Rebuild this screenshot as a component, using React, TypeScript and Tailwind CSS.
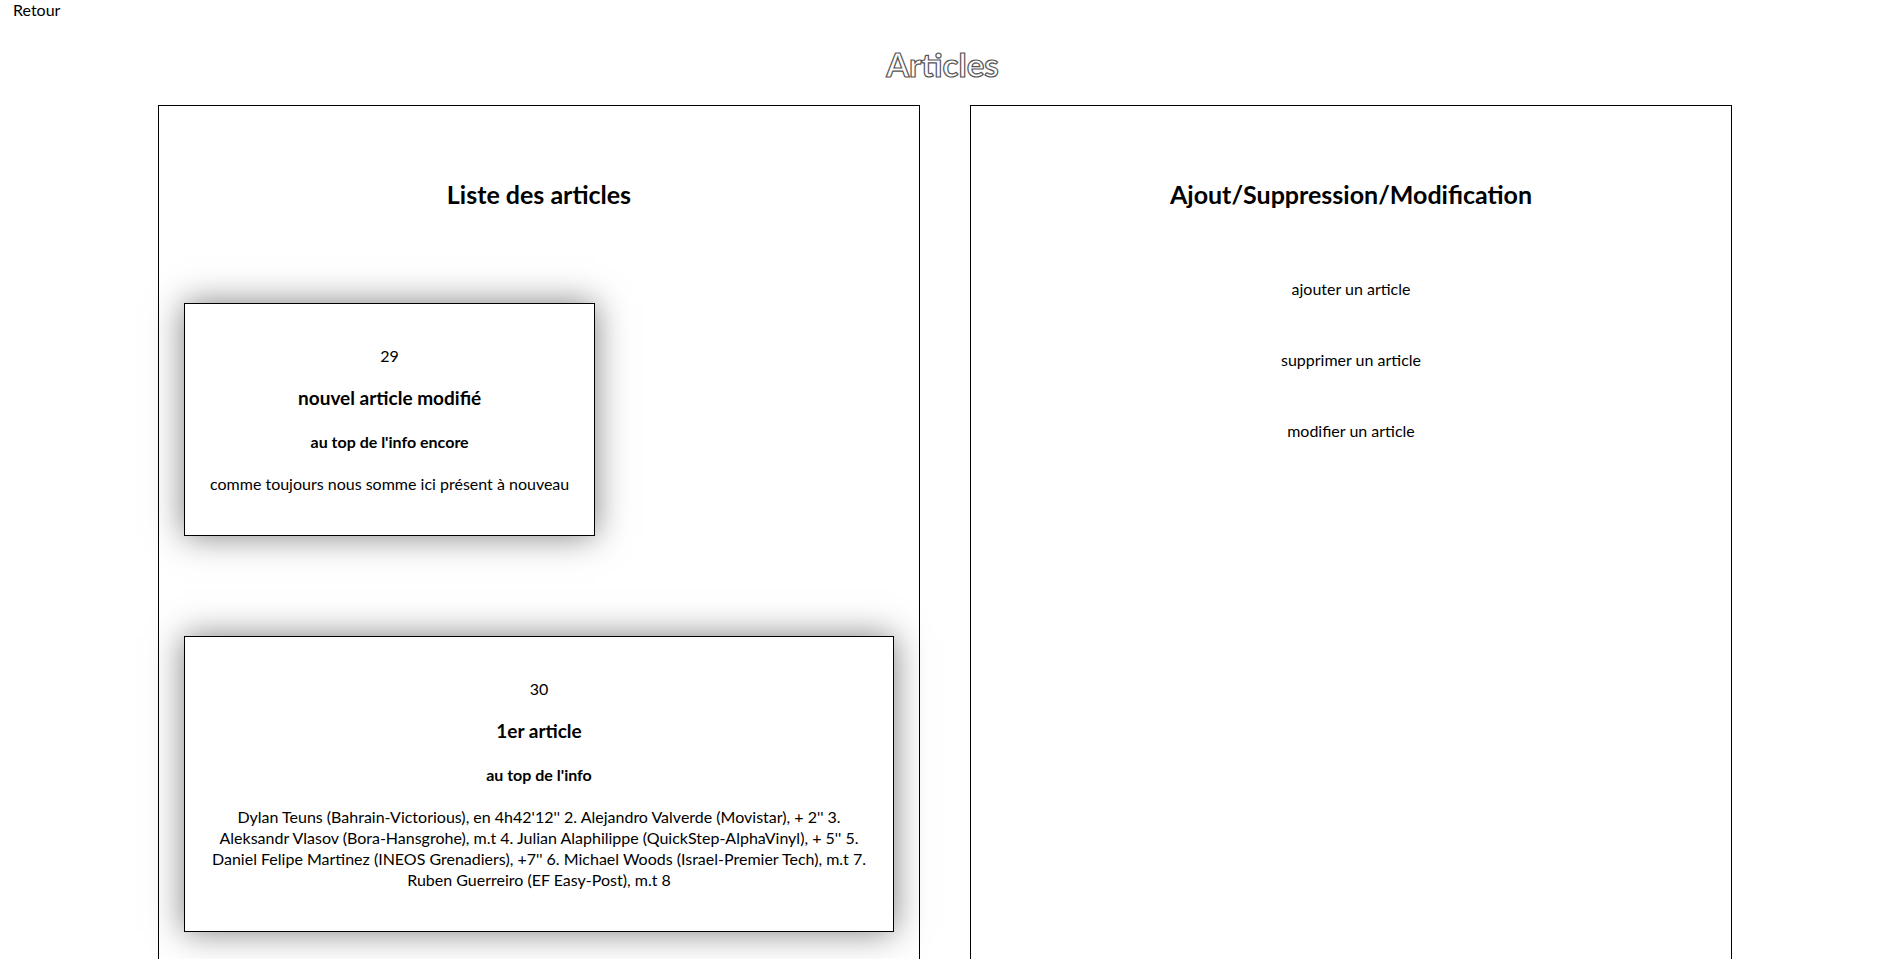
import React from "react";

type Article = {
  id: number;
  title: string;
  subtitle: string;
  content: string;
};

const articles: Article[] = [
  {
    id: 29,
    title: "nouvel article modifié",
    subtitle: "au top de l'info encore",
    content: "comme toujours nous somme ici présent à nouveau",
  },
  {
    id: 30,
    title: "1er article",
    subtitle: "au top de l'info",
    content:
      "Dylan Teuns (Bahrain-Victorious), en 4h42'12'' 2. Alejandro Valverde (Movistar), + 2'' 3. Aleksandr Vlasov (Bora-Hansgrohe), m.t 4. Julian Alaphilippe (QuickStep-AlphaVinyl), + 5'' 5. Daniel Felipe Martinez (INEOS Grenadiers), +7'' 6. Michael Woods (Israel-Premier Tech), m.t 7. Ruben Guerreiro (EF Easy-Post), m.t 8",
  },
];

const ArticleCard: React.FC<{ article: Article }> = ({ article }) => {
  return (
    <div className="w-fit max-w-full border border-black bg-white p-[25px] text-center shadow-[0_0_32px_rgba(0,0,0,0.5)]">
      <p className="mt-4 text-base leading-[21px]">{article.id}</p>
      <h3 className="mt-[19px] text-[19px] font-bold leading-[25px]">
        {article.title}
      </h3>
      <h4 className="mt-[21px] text-base font-bold leading-[21px]">
        {article.subtitle}
      </h4>
      <p className="mt-[21px] mb-4 text-base leading-[21px]">
        {article.content}
      </p>
    </div>
  );
};

const App: React.FC = () => {
  return (
    <div className="min-h-screen bg-white font-['Lato',sans-serif] text-black">
      <button className="block pl-[13px] text-base leading-5">Retour</button>
      <h1 className="mt-[25px] text-center text-[33px] font-bold leading-[38px] text-white [-webkit-text-stroke:1.2px_#555]">
        Articles
      </h1>

      <div className="mt-[22px] flex gap-[50px] pl-[158px]">
        <div className="w-[762px] border border-black px-[25px] pt-[72px] pb-[120px]">
          <h2 className="text-center text-[25px] font-bold leading-8">
            Liste des articles
          </h2>
          <div className="mt-[93px] flex flex-col items-start gap-[100px]">
            {articles.map((article) => (
              <ArticleCard key={article.id} article={article} />
            ))}
          </div>
        </div>

        <div className="w-[762px] border border-black px-[25px] pt-[72px]">
          <h2 className="text-center text-[25px] font-bold leading-8">
            Ajout/Suppression/Modification
          </h2>
          <div className="mt-[68px] flex flex-col items-center gap-[50px]">
            <p className="text-base leading-[21px]">ajouter un article</p>
            <p className="text-base leading-[21px]">supprimer un article</p>
            <p className="text-base leading-[21px]">modifier un article</p>
          </div>
        </div>
      </div>
    </div>
  );
};

export default App;
